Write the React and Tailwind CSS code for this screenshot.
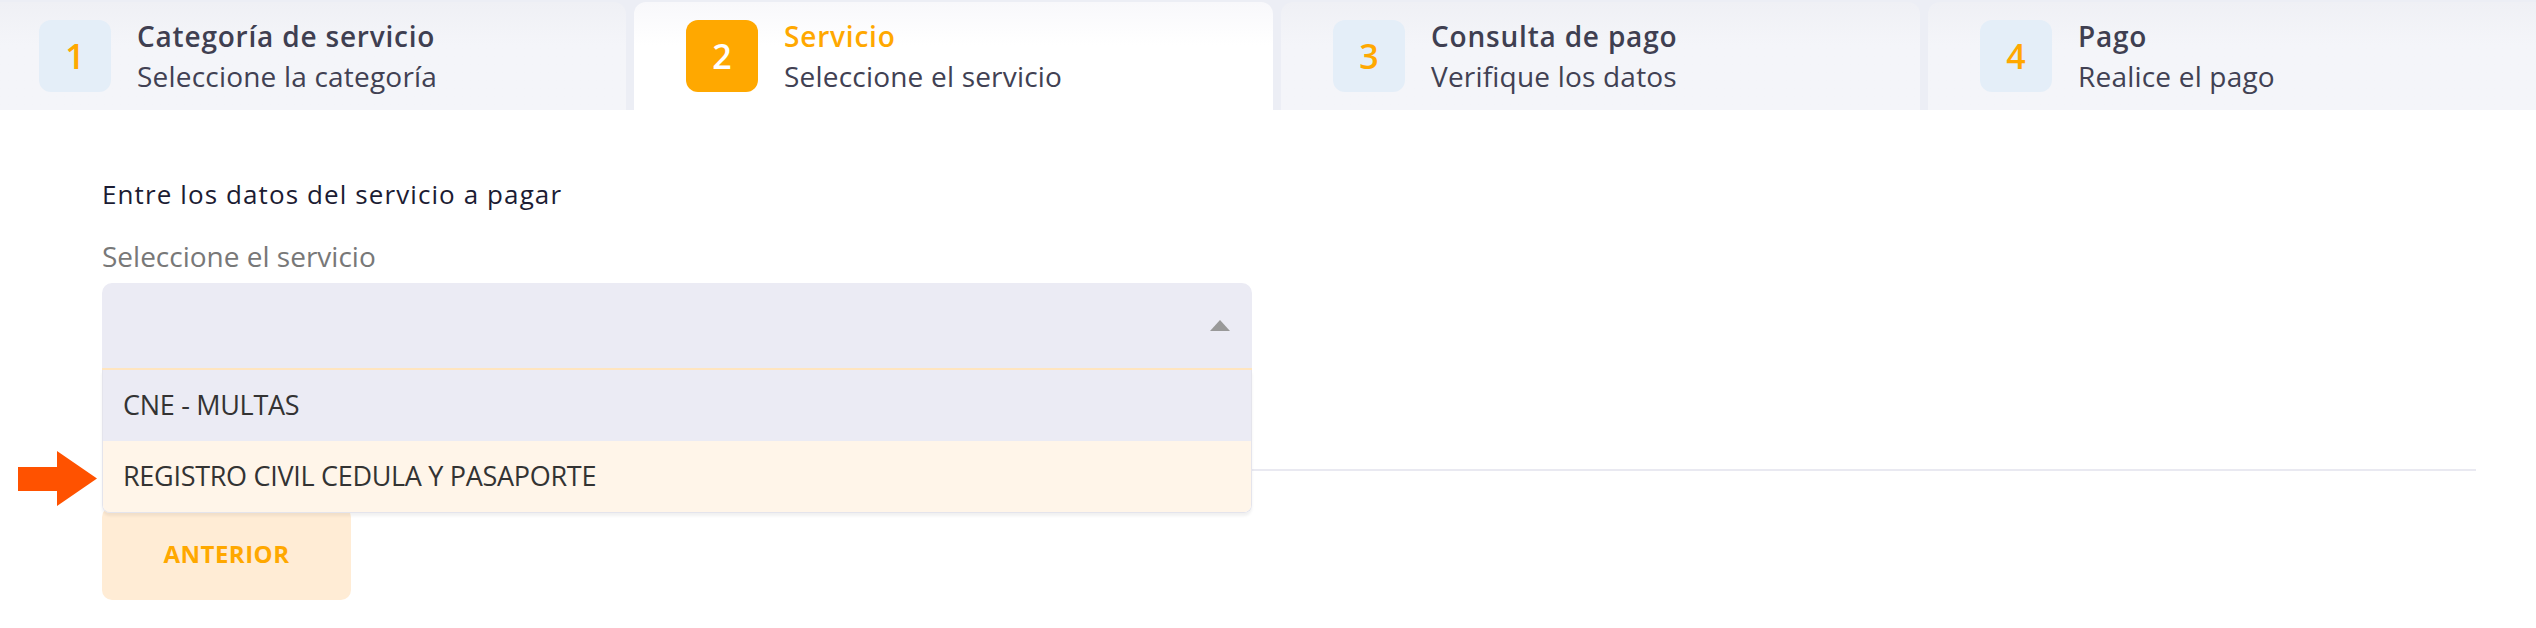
import clsx from "clsx";

const steps = [
  { n: "1", title: "Categoría de servicio", sub: "Seleccione la categoría" },
  { n: "2", title: "Servicio", sub: "Seleccione el servicio", active: true },
  { n: "3", title: "Consulta de pago", sub: "Verifique los datos" },
  { n: "4", title: "Pago", sub: "Realice el pago" },
];

const services = ["CNE - MULTAS", "REGISTRO CIVIL CEDULA Y PASAPORTE"];

function StepTab({ step }) {
  const active = step.active;
  return (
    <div
      className={clsx(
        "flex h-[108px] w-[639px] shrink-0 items-center gap-[26px] rounded-t-[12px] pl-[52px]",
        active
          ? "bg-linear-to-b from-[#f8f8fb] to-white to-40%"
          : "bg-linear-to-b from-[#eff0f5] to-[#f4f5f9] to-40%"
      )}
    >
      <div
        className={clsx(
          "flex h-[72px] w-[72px] items-center justify-center rounded-[12px] text-[34px] font-semibold",
          active ? "bg-[#ffa800] text-white" : "bg-[#e4eef8] text-[#ffa800]"
        )}
      >
        {step.n}
      </div>
      <div className="flex flex-col">
        <span
          className={clsx(
            "text-[28px] font-semibold leading-[40px] tracking-[0.8px]",
            active ? "text-[#ffa800]" : "text-[#3f3f51]"
          )}
        >
          {step.title}
        </span>
        <span className="text-[28px] leading-[40px] tracking-[0.2px] text-[#414153]">{step.sub}</span>
      </div>
    </div>
  );
}

export default function App() {
  return (
    <div className="relative min-h-screen bg-white font-['Open_Sans',sans-serif]">
      {/* STEPS */}
      <div className="w-full overflow-hidden bg-[#eceef5] pt-[2px]">
        <div className="-ml-[13px] flex gap-2">
          {steps.map((s) => (
            <StepTab key={s.n} step={s} />
          ))}
        </div>
      </div>

      {/* FORM */}
      <div className="pl-[102px] pr-[60px] pt-[66px]">
        <p className="text-[26px] font-medium leading-[36px] tracking-[1.1px] text-[#1c1c33]">
          Entre los datos del servicio a pagar
        </p>
        <p className="mt-[26px] text-[28px] leading-[36px] text-[#787878]">Seleccione el servicio</p>

        <div className="relative mt-[9px] w-[1150px]">
          <div className="flex h-[87px] items-center justify-end rounded-t-[10px] border-b-2 border-[#ffe5bf] bg-[#ebebf4] pr-[22px]">
            <svg width="20" height="11" viewBox="0 0 20 11">
              <polygon points="0,11 10,0 20,11" fill="#999999" />
            </svg>
          </div>

          {/* open dropdown */}
          <ul className="absolute left-0 top-full z-10 w-full overflow-hidden rounded-b-[8px] border border-t-0 border-[#e4e4ec] shadow-[0_3px_3px_rgba(0,0,0,0.06)]">
            {services.map((name, i) => (
              <li
                key={name}
                className={clsx(
                  "flex h-[71px] items-center pl-[20px] text-[27px] tracking-[-0.3px] text-[#333333]",
                  i === 1 ? "bg-[#fff5e9]" : "bg-[#ebebf4]"
                )}
              >
                {name}
              </li>
            ))}
          </ul>
        </div>

        <div className="mt-[99px] h-[2px] bg-[#e9e9f1]" />

        <button className="mt-[36px] flex h-[93px] w-[249px] items-center justify-center rounded-[10px] bg-[#ffecd5] text-[24px] font-bold tracking-[0.5px] text-[#ffa800]">
          ANTERIOR
        </button>
      </div>

      {/* annotation arrow */}
      <svg className="absolute left-[18px] top-[451px]" width="79" height="55" viewBox="0 0 79 55">
        <polygon points="0,16 39,16 39,0 79,27.5 39,55 39,40 0,40" fill="#ff5200" />
      </svg>
    </div>
  );
}
